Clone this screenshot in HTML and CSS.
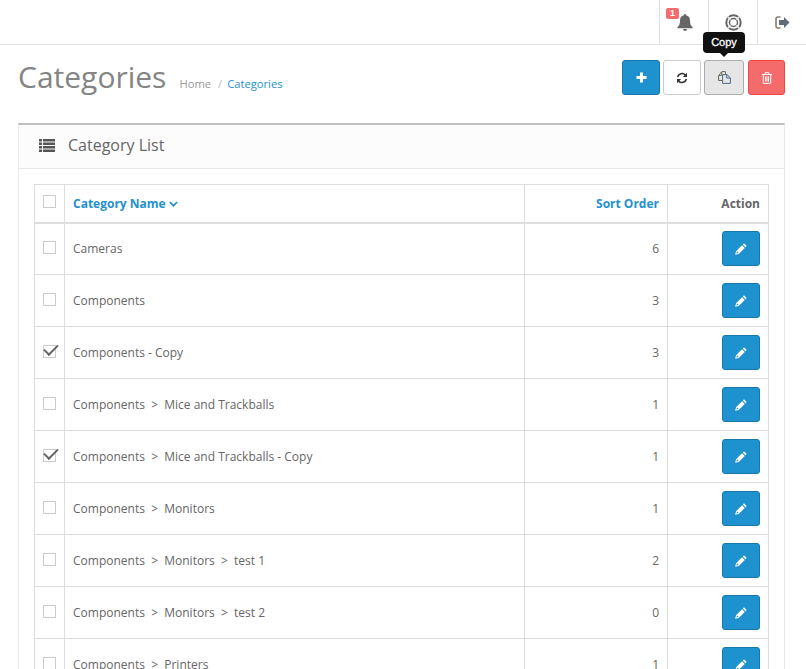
FILE: index.html
```html
<!DOCTYPE html>
<html lang="en">
<head>
<meta charset="utf-8">
<title>Categories</title>
<link rel="stylesheet" href="styles.css">
</head>
<body>
<svg class="defs" width="0" height="0" aria-hidden="true">
  <symbol id="i-pencil" viewBox="0 0 12 12"><path d="M9 .3 11.700 3 10.500 4.200 7.800 1.500ZM7.100 2.200 9.800 4.900 3.700 11 .2 11.800 1 8.300ZM2 8.400 1.400 10.600 3.600 10 2.900 9.300Z" fill="currentColor" fill-rule="evenodd"/></symbol>
</svg>
<header class="topbar">
  <a class="top-cell"><span class="badge">1</span>
    <svg class="bell" width="16" height="17" viewBox="0 0 16 17"><path d="M8 0a1.100 1.100 0 0 1 1.100 1.300C11.600 1.800 13 3.800 13 6.500c0 3.500.8 5.300 2.600 6.800v.9H.4v-.9C2.200 11.800 3 10 3 6.500 3 3.800 4.400 1.800 6.900 1.300A1.100 1.100 0 0 1 8 0ZM6 15h4a2 2 0 0 1-4 0Z" fill="#666"/></svg>
  </a>
  <a class="top-cell">
    <svg width="17" height="17" viewBox="0 0 17 17" fill="none"><circle cx="8.500" cy="8.500" r="7.200" stroke="#666" stroke-width="2"/><circle cx="8.500" cy="8.500" r="4" stroke="#666" stroke-width="1.500"/><path d="M2.900 2.900 5.600 5.600M14.100 2.900 11.400 5.600M2.900 14.100 5.600 11.400M14.100 14.100 11.400 11.400" stroke="#dfe6ec" stroke-width="1.800"/></svg>
  </a>
  <a class="top-cell">
    <svg width="15" height="13" viewBox="0 0 15 13"><path d="M5.500 1H3a2 2 0 0 0-2 2v7a2 2 0 0 0 2 2h2.500" fill="none" stroke="#8a7f70" stroke-width="1.600"/><path d="M9 1 14.500 6.500 9 12V9H4V4h5Z" fill="#5f6b75"/></svg>
  </a>
</header>

<main class="page">
  <div class="page-header">
    <div class="title-group">
      <h1>Categories</h1>
      <ul class="breadcrumb"><li>Home</li><li class="sep">/</li><li class="crumb-link">Categories</li></ul>
    </div>
    <div class="actions">
      <a class="btn btn-primary">
        <svg width="11" height="11" viewBox="0 0 11 11"><path d="M4 .5h3V4h3.500v3H7v3.500H4V7H.5V4H4Z" fill="#fff"/></svg>
      </a>
      <a class="btn btn-default">
        <svg width="12" height="12" viewBox="0 0 12 12" fill="none"><path d="M1.600 5A4.500 4.500 0 0 1 9.400 3.100" stroke="#333" stroke-width="1.600"/><path d="M11 .8V5H6.800Z" fill="#333"/><path d="M10.400 7A4.500 4.500 0 0 1 2.600 8.900" stroke="#333" stroke-width="1.600"/><path d="M1 11.200V7h4.200Z" fill="#333"/></svg>
      </a>
      <a class="btn btn-active">
        <span class="tooltip">Copy</span>
        <svg width="13" height="13" viewBox="0 0 13 13" fill="none"><path d="M4.500 9.500H.6V4.700L3.800.6H7.500V3.500" stroke="#6d6458"/><path d="M3.700 1V4.400H.8" stroke="#6d6458"/><path d="M4.600 3.600H9L12.400 6.800V12.400H4.600Z" stroke="#4d6a86"/><path d="M8.700 3.800V7H12.200" stroke="#4d6a86"/></svg>
      </a>
      <a class="btn btn-danger">
        <svg width="10" height="12" viewBox="0 0 10 12" fill="none"><path d="M0 2.500h10M3.200 2.500V.7h3.600v1.800M1.300 2.500v8.900h7.400V2.500M3.500 4.500v5M5 4.500v5M6.500 4.500v5" stroke="#fff"/></svg>
      </a>
    </div>
  </div>

  <section class="panel">
    <div class="panel-heading">
      <svg width="16" height="13" viewBox="0 0 16 13"><path d="M0 0h3v2.400H0ZM4 0h12v2.400H4ZM0 3.500h3v2.400H0ZM4 3.500h12v2.400H4ZM0 7.100h3v2.400H0ZM4 7.100h12v2.400H4ZM0 10.600h3V13H0ZM4 10.600h12V13H4Z" fill="#555"/></svg>
      <h3>Category List</h3>
    </div>
    <div class="panel-body">
      <table class="list">
        <colgroup><col class="c-check"><col class="c-name"><col class="c-sort"><col class="c-action"></colgroup>
        <thead>
          <tr>
            <th class="center"><input type="checkbox"></th>
            <th class="left"><a class="sort">Category Name <svg class="chevron" width="9" height="6" viewBox="0 0 9 6" fill="none"><path d="M.8 1 4.500 4.700 8.200 1" stroke="currentColor" stroke-width="1.700"/></svg></a></th>
            <th class="right"><a class="sort">Sort Order</a></th>
            <th class="right">Action</th>
          </tr>
        </thead>
        <tbody>
          <tr><td class="center"><input type="checkbox"></td><td>Cameras</td><td class="right">6</td><td class="right"><a class="btn btn-primary btn-edit"><svg width="12" height="12"><use href="#i-pencil"/></svg></a></td></tr>
          <tr><td class="center"><input type="checkbox"></td><td>Components</td><td class="right">3</td><td class="right"><a class="btn btn-primary btn-edit"><svg width="12" height="12"><use href="#i-pencil"/></svg></a></td></tr>
          <tr><td class="center"><input type="checkbox" checked></td><td>Components - Copy</td><td class="right">3</td><td class="right"><a class="btn btn-primary btn-edit"><svg width="12" height="12"><use href="#i-pencil"/></svg></a></td></tr>
          <tr><td class="center"><input type="checkbox"></td><td>Components&nbsp;&nbsp;&gt;&nbsp;&nbsp;Mice and Trackballs</td><td class="right">1</td><td class="right"><a class="btn btn-primary btn-edit"><svg width="12" height="12"><use href="#i-pencil"/></svg></a></td></tr>
          <tr><td class="center"><input type="checkbox" checked></td><td>Components&nbsp;&nbsp;&gt;&nbsp;&nbsp;Mice and Trackballs - Copy</td><td class="right">1</td><td class="right"><a class="btn btn-primary btn-edit"><svg width="12" height="12"><use href="#i-pencil"/></svg></a></td></tr>
          <tr><td class="center"><input type="checkbox"></td><td>Components&nbsp;&nbsp;&gt;&nbsp;&nbsp;Monitors</td><td class="right">1</td><td class="right"><a class="btn btn-primary btn-edit"><svg width="12" height="12"><use href="#i-pencil"/></svg></a></td></tr>
          <tr><td class="center"><input type="checkbox"></td><td>Components&nbsp;&nbsp;&gt;&nbsp;&nbsp;Monitors&nbsp;&nbsp;&gt;&nbsp;&nbsp;test 1</td><td class="right">2</td><td class="right"><a class="btn btn-primary btn-edit"><svg width="12" height="12"><use href="#i-pencil"/></svg></a></td></tr>
          <tr><td class="center"><input type="checkbox"></td><td>Components&nbsp;&nbsp;&gt;&nbsp;&nbsp;Monitors&nbsp;&nbsp;&gt;&nbsp;&nbsp;test 2</td><td class="right">0</td><td class="right"><a class="btn btn-primary btn-edit"><svg width="12" height="12"><use href="#i-pencil"/></svg></a></td></tr>
          <tr><td class="center"><input type="checkbox"></td><td>Components&nbsp;&nbsp;&gt;&nbsp;&nbsp;Printers</td><td class="right">1</td><td class="right"><a class="btn btn-primary btn-edit"><svg width="12" height="12"><use href="#i-pencil"/></svg></a></td></tr>
        </tbody>
      </table>
    </div>
  </section>
</main>
</body>
</html>
```
FILE: styles.css
```css
* { box-sizing: border-box; }
html, body { height: 669px; overflow: hidden; }
body { margin: 0; background: #fff; font-family: "Open Sans", sans-serif; font-size: 12px; color: #666; }
a { text-decoration: none; }
.defs { position: absolute; }

.topbar { height: 45px; display: flex; justify-content: flex-end; border-bottom: 1px solid #e1e1e1; }
.top-cell { position: relative; width: 49px; height: 44px; display: flex; align-items: center; justify-content: center; border-left: 1px solid #e1e1e1; padding-top: 1px; }
.bell { margin-left: 2px; }
.badge { position: absolute; left: 6px; top: 8px; width: 13px; height: 11px; border-radius: 2px; background: #f56b6b; color: #fff; font: bold 9px/11px "Liberation Sans", sans-serif; text-align: center; }

.page { padding: 0 21px 0 18px; }
.page-header { height: 78px; display: flex; justify-content: space-between; align-items: flex-start; }
.title-group { display: flex; align-items: baseline; padding-top: 12px; }
h1 { margin: 0; font-size: 30px; font-weight: 400; line-height: 40px; color: #848484; }
.breadcrumb { display: flex; margin: 0 0 0 13px; padding: 0; list-style: none; font-size: 11.2px; color: #999; }
.sep { margin: 0 5px 0 7px; color: #bbb; }
.crumb-link { color: #1e91cf; }

.actions { display: flex; gap: 3px; padding-top: 15px; }
.btn { position: relative; display: flex; align-items: center; justify-content: center; width: 38px; height: 35px; border-radius: 3px; border: 1px solid; }
.btn-primary { background: #1e91cf; border-color: #1978ab; }
.btn-default { background: #fff; border-color: #ccc; }
.btn-active { width: 40px; background: #e6e6e6; border-color: #adadad; }
.btn-danger { width: 37px; background: #f56b6b; border-color: #f24545; margin-left: 1px; }
.tooltip { position: absolute; left: -2px; top: -29px; width: 42px; height: 21px; border-radius: 4px; background: #111; color: #fff; font: 11px/20px "Liberation Sans", sans-serif; text-align: center; -webkit-text-stroke: .3px #fff; }
.tooltip::after { content: ""; position: absolute; left: 17px; top: 21px; border: 4px solid transparent; border-top-color: #111; border-bottom-width: 0; }

.panel { border: 1px solid #e8e8e8; border-top: 2px solid #bfbfbf; }
.panel-heading { height: 44px; display: flex; align-items: center; gap: 13px; padding: 0 20px 3px; background: #fcfcfc; border-bottom: 1px solid #e8e8e8; }
h3 { margin: 0; font-size: 16px; font-weight: 400; color: #666; }
.panel-body { padding: 15px; }

.list { width: 734px; table-layout: fixed; border-collapse: collapse; }
.c-check { width: 30px; }
.c-name { width: 460px; }
.c-sort { width: 143px; }
.c-action { width: 101px; }
.list th, .list td { border: 1px solid #ddd; padding: 0 8px; }
.list th { height: 38px; font-size: 12px; font-weight: 700; text-align: left; color: #666; border-bottom-width: 2px; }
.list td { height: 52px; color: #666; }
.list .center { text-align: center; padding: 0; }
.list .right { text-align: right; }
.list td.right .btn-edit { margin-left: auto; }
.sort { color: #1e91cf; }
.chevron { position: relative; top: -1px; }
.btn-edit { color: #fff; }

input[type="checkbox"] { appearance: none; width: 13px; height: 13px; margin: 0 1px 4px 0; vertical-align: middle; border: 1px solid #ccc; background: #fff; position: relative; }
input[type="checkbox"]:checked::after { content: ""; position: absolute; left: 1px; top: -1px; width: 12px; height: 6px; border-left: 2px solid #666; border-bottom: 2px solid #666; transform: rotate(-45deg); transform-origin: 40% 60%; }
```
